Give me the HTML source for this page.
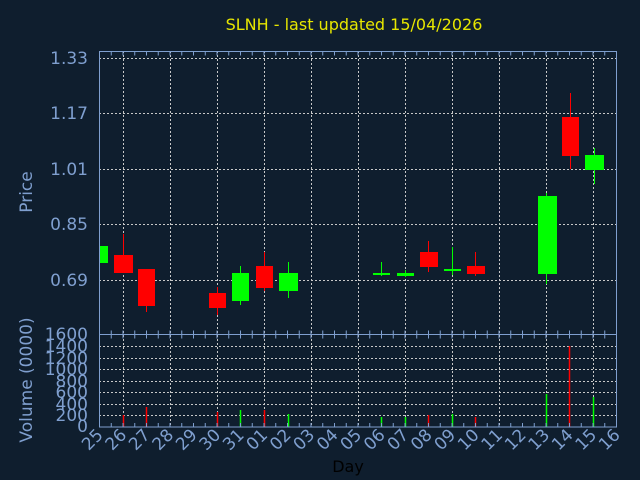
<!DOCTYPE html>
<html><head><meta charset="utf-8"><style>
html,body{margin:0;padding:0;background:#0f1e2e;}
svg{display:block;font-family:"DejaVu Sans","Liberation Sans",sans-serif;}
</style></head><body>
<svg width="640" height="480" viewBox="0 0 640 480" xmlns="http://www.w3.org/2000/svg">
<rect width="640" height="480" fill="#0f1e2e"/>
<text x="354" y="30" fill="#e6e600" font-size="16" text-anchor="middle">SLNH - last updated 15/04/2026</text>
<g stroke="#c8c8c8" stroke-width="1" stroke-dasharray="2 2">
<line x1="99" y1="58.5" x2="617" y2="58.5"/>
<line x1="99" y1="113.5" x2="617" y2="113.5"/>
<line x1="99" y1="169.5" x2="617" y2="169.5"/>
<line x1="99" y1="224.5" x2="617" y2="224.5"/>
<line x1="99" y1="280.5" x2="617" y2="280.5"/>
<line x1="99" y1="346.5" x2="617" y2="346.5"/>
<line x1="99" y1="358.5" x2="617" y2="358.5"/>
<line x1="99" y1="369.5" x2="617" y2="369.5"/>
<line x1="99" y1="381.5" x2="617" y2="381.5"/>
<line x1="99" y1="392.5" x2="617" y2="392.5"/>
<line x1="99" y1="404.5" x2="617" y2="404.5"/>
<line x1="99" y1="415.5" x2="617" y2="415.5"/>
<line x1="123.5" y1="51" x2="123.5" y2="427"/>
<line x1="170.5" y1="51" x2="170.5" y2="427"/>
<line x1="217.5" y1="51" x2="217.5" y2="427"/>
<line x1="264.5" y1="51" x2="264.5" y2="427"/>
<line x1="311.5" y1="51" x2="311.5" y2="427"/>
<line x1="358.5" y1="51" x2="358.5" y2="427"/>
<line x1="405.5" y1="51" x2="405.5" y2="427"/>
<line x1="452.5" y1="51" x2="452.5" y2="427"/>
<line x1="499.5" y1="51" x2="499.5" y2="427"/>
<line x1="546.5" y1="51" x2="546.5" y2="427"/>
<line x1="593.5" y1="51" x2="593.5" y2="427"/>
</g>
<!-- candles -->
<g>
<rect x="99" y="246" width="9" height="17" fill="#00ff00"/>
<line x1="123.5" y1="234" x2="123.5" y2="273" stroke="#ff0000"/><rect x="114" y="255" width="19" height="18" fill="#ff0000"/>
<line x1="146.5" y1="269" x2="146.5" y2="312" stroke="#ff0000"/><rect x="138" y="269" width="17" height="37" fill="#ff0000"/>
<line x1="217.5" y1="287" x2="217.5" y2="315" stroke="#ff0000"/><rect x="209" y="293" width="17" height="15" fill="#ff0000"/>
<line x1="240.5" y1="266" x2="240.5" y2="305" stroke="#00ff00"/><rect x="232" y="273" width="17" height="28" fill="#00ff00"/>
<line x1="264.5" y1="252" x2="264.5" y2="291" stroke="#ff0000"/><rect x="256" y="266" width="17" height="22" fill="#ff0000"/>
<line x1="288.5" y1="262" x2="288.5" y2="298" stroke="#00ff00"/><rect x="279" y="273" width="19" height="18" fill="#00ff00"/>
<line x1="381.5" y1="262" x2="381.5" y2="276" stroke="#00ff00"/><rect x="373" y="273" width="17" height="2" fill="#00ff00"/>
<line x1="405.5" y1="270" x2="405.5" y2="277" stroke="#00ff00"/><rect x="397" y="273" width="17" height="3" fill="#00ff00"/>
<line x1="428.5" y1="241" x2="428.5" y2="272" stroke="#ff0000"/><rect x="420" y="252" width="18" height="15" fill="#ff0000"/>
<line x1="452.5" y1="247" x2="452.5" y2="275" stroke="#00ff00"/><rect x="444" y="269" width="17" height="2" fill="#00ff00"/>
<line x1="475.5" y1="252" x2="475.5" y2="276" stroke="#ff0000"/><rect x="467" y="266" width="18" height="8" fill="#ff0000"/>
<line x1="546.5" y1="193" x2="546.5" y2="284" stroke="#00ff00"/><rect x="538" y="196" width="19" height="78" fill="#00ff00"/>
<line x1="570.5" y1="93" x2="570.5" y2="169" stroke="#ff0000"/><rect x="562" y="117" width="17" height="39" fill="#ff0000"/>
<line x1="594.5" y1="148" x2="594.5" y2="184" stroke="#00ff00"/><rect x="585" y="155" width="19" height="15" fill="#00ff00"/>
</g>
<!-- volume -->
<g stroke-width="1.5">
<line x1="123.5" y1="415" x2="123.5" y2="427" stroke="#ff0000"/>
<line x1="146.5" y1="407" x2="146.5" y2="427" stroke="#ff0000"/>
<line x1="217.5" y1="412" x2="217.5" y2="427" stroke="#ff0000"/>
<line x1="240.5" y1="410" x2="240.5" y2="427" stroke="#00ff00"/>
<line x1="264.5" y1="410" x2="264.5" y2="427" stroke="#ff0000"/>
<line x1="288.5" y1="414" x2="288.5" y2="427" stroke="#00ff00"/>
<line x1="381.5" y1="417" x2="381.5" y2="427" stroke="#00ff00"/>
<line x1="405.5" y1="417" x2="405.5" y2="427" stroke="#00ff00"/>
<line x1="428.5" y1="415" x2="428.5" y2="427" stroke="#ff0000"/>
<line x1="452.5" y1="414" x2="452.5" y2="427" stroke="#00ff00"/>
<line x1="475.5" y1="417" x2="475.5" y2="427" stroke="#ff0000"/>
<line x1="546.5" y1="394" x2="546.5" y2="427" stroke="#00ff00"/>
<line x1="569.5" y1="346" x2="569.5" y2="427" stroke="#ff0000"/>
<line x1="593.5" y1="397" x2="593.5" y2="427" stroke="#00ff00"/>
</g>
<!-- frames -->
<g stroke="#7f9fcf" fill="none">
<rect x="99.5" y="51.5" width="517" height="283"/>
<rect x="99.5" y="334.5" width="517" height="92.5"/>
<line x1="99" y1="53.5" x2="617" y2="53.5" stroke-width="4" stroke-dasharray="1 10.75" stroke-dashoffset="-0"/>
<line x1="99" y1="332.5" x2="617" y2="332.5" stroke-width="4" stroke-dasharray="1 10.75"/>
<line x1="99" y1="336.5" x2="617" y2="336.5" stroke-width="4" stroke-dasharray="1 10.75"/>
<line x1="99" y1="425" x2="617" y2="425" stroke-width="4" stroke-dasharray="1 10.75"/>
</g>
<g fill="#7f9fcf" font-size="17" text-anchor="end">
<text x="88" y="64">1.33</text>
<text x="88" y="119">1.17</text>
<text x="88" y="175">1.01</text>
<text x="88" y="230">0.85</text>
<text x="88" y="286">0.69</text>
<text x="88" y="340">1600</text>
<text x="88" y="352">1400</text>
<text x="88" y="364">1200</text>
<text x="88" y="375">1000</text>
<text x="88" y="387">800</text>
<text x="88" y="398">600</text>
<text x="88" y="410">400</text>
<text x="88" y="421">200</text>
<text x="88" y="432">0</text>
</g>
<text transform="translate(32,192) rotate(-90)" fill="#7f9fcf" font-size="17" text-anchor="middle">Price</text>
<text transform="translate(32,380) rotate(-90)" fill="#7f9fcf" font-size="17" text-anchor="middle">Volume (0000)</text>
<g fill="#7f9fcf" font-size="17" text-anchor="end">
<text transform="translate(104,436) rotate(-45)">25</text>
<text transform="translate(127.5,436) rotate(-45)">26</text>
<text transform="translate(151,436) rotate(-45)">27</text>
<text transform="translate(174.5,436) rotate(-45)">28</text>
<text transform="translate(198,436) rotate(-45)">29</text>
<text transform="translate(221.5,436) rotate(-45)">30</text>
<text transform="translate(245,436) rotate(-45)">31</text>
<text transform="translate(268.5,436) rotate(-45)">01</text>
<text transform="translate(292,436) rotate(-45)">02</text>
<text transform="translate(315.5,436) rotate(-45)">03</text>
<text transform="translate(339,436) rotate(-45)">04</text>
<text transform="translate(362.5,436) rotate(-45)">05</text>
<text transform="translate(386,436) rotate(-45)">06</text>
<text transform="translate(409.5,436) rotate(-45)">07</text>
<text transform="translate(433,436) rotate(-45)">08</text>
<text transform="translate(456.5,436) rotate(-45)">09</text>
<text transform="translate(480,436) rotate(-45)">10</text>
<text transform="translate(503.5,436) rotate(-45)">11</text>
<text transform="translate(527,436) rotate(-45)">12</text>
<text transform="translate(550.5,436) rotate(-45)">13</text>
<text transform="translate(574,436) rotate(-45)">14</text>
<text transform="translate(597.5,436) rotate(-45)">15</text>
<text transform="translate(621,436) rotate(-45)">16</text>
</g>
<text x="348" y="472" fill="#000000" font-size="16" text-anchor="middle">Day</text>
</svg>
</body></html>
